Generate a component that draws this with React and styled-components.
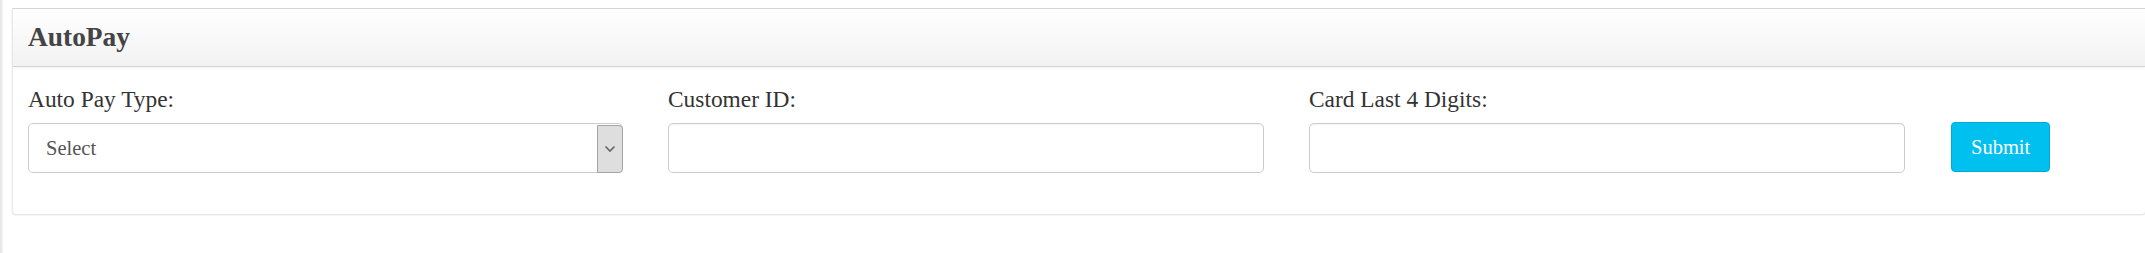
import React, { useState } from 'react';
import styled, { createGlobalStyle } from 'styled-components';

const GlobalStyle = createGlobalStyle`
  html, body {
    margin: 0;
    padding: 0;
    background: #ffffff;
  }
  body {
    font-family: "Liberation Serif", "Times New Roman", serif;
    color: #333333;
  }
  * {
    box-sizing: border-box;
  }
`;

const fields = [
  { id: 'customerId', label: 'Customer ID:' },
  { id: 'cardLast4', label: 'Card Last 4 Digits:' },
];

function Chevron() {
  return (
    <svg width="12" height="8" viewBox="0 0 12 8" aria-hidden="true">
      <path d="M1.5 1.5 L6 6 L10.5 1.5" fill="none" stroke="#666666" strokeWidth="1.6" />
    </svg>
  );
}

function App() {
  const [values, setValues] = useState({ customerId: '', cardLast4: '' });

  return (
    <>
      <GlobalStyle />
      <Page>
        <SideEdge />
        <Content>
          <Panel>
            <PanelHeader>
              <PanelTitle>AutoPay</PanelTitle>
            </PanelHeader>
            <PanelBody>
              <Field>
                <Label>Auto Pay Type:</Label>
                <SelectBox>
                  <SelectText>Select</SelectText>
                  <ArrowBox>
                    <Chevron />
                  </ArrowBox>
                </SelectBox>
              </Field>
              {fields.map((f) => (
                <Field key={f.id}>
                  <Label htmlFor={f.id}>{f.label}</Label>
                  <TextInput
                    id={f.id}
                    value={values[f.id]}
                    onChange={(e) => setValues({ ...values, [f.id]: e.target.value })}
                  />
                </Field>
              ))}
              <ButtonCell>
                <SubmitButton type="button">Submit</SubmitButton>
              </ButtonCell>
            </PanelBody>
          </Panel>
        </Content>
      </Page>
    </>
  );
}

export default App;

const Page = styled.div`
  display: flex;
  width: 2145px;
  height: 253px;
  overflow: hidden;
`;

const SideEdge = styled.div`
  width: 3px;
  flex: none;
  background: linear-gradient(to right, #e4e4e4, #f4f4f4);
`;

const Content = styled.div`
  flex: 1;
  padding: 8px 0 0 9px;
`;

const Panel = styled.div`
  width: 2134px;
  height: 206px;
  background: #ffffff;
  border-top: 1px solid #d4d4d4;
  border-left: 1px solid #ececec;
  border-right: 1px solid #ececec;
  border-radius: 0 0 4px 4px;
  box-shadow: 0 1px 2px rgba(0, 0, 0, 0.14);
`;

const PanelHeader = styled.div`
  display: flex;
  align-items: center;
  height: 58px;
  padding: 0 15px;
  background: linear-gradient(to bottom, #ffffff 0%, #f2f2f2 100%);
  border-bottom: 1px solid #d2d2d2;
  box-shadow: 0 2px 3px rgba(0, 0, 0, 0.04);
`;

const PanelTitle = styled.h3`
  margin: 0;
  font-size: 27.4px;
  line-height: 1.1;
  font-weight: 700;
  color: #444444;
`;

const PanelBody = styled.div`
  display: grid;
  grid-template-columns: 595px 596px 596px auto;
  column-gap: 45px;
  padding: 16px 15px 0 15px;
`;

const Field = styled.div`
  display: flex;
  flex-direction: column;
`;

const Label = styled.label`
  font-size: 23.4px;
  line-height: 33.4px;
  color: #333333;
  margin-bottom: 7px;
`;

const SelectBox = styled.div`
  display: flex;
  align-items: stretch;
  height: 50px;
  padding: 1px 0 0 0;
  border: 1px solid #cccccc;
  border-radius: 5px;
  background: #ffffff;
`;

const SelectText = styled.span`
  flex: 1;
  display: flex;
  align-items: center;
  padding-left: 17px;
  font-size: 20.5px;
  color: #555555;
`;

const ArrowBox = styled.span`
  width: 26px;
  display: flex;
  align-items: center;
  justify-content: center;
  background: #dedede;
  border: 1px solid #a4a4a4;
  border-radius: 0 4px 4px 0;
  margin-right: -1px;
  margin-bottom: -1px;
`;

const TextInput = styled.input`
  height: 50px;
  width: 100%;
  border: 1px solid #cccccc;
  border-radius: 5px;
  padding: 0 17px;
  font-family: "Liberation Serif", "Times New Roman", serif;
  font-size: 20.5px;
  color: #555555;
  outline: none;
  box-shadow: inset 0 1px 1px rgba(0, 0, 0, 0.05);
`;

const ButtonCell = styled.div`
  display: flex;
  padding-top: 39px;
  padding-left: 1px;
`;

const SubmitButton = styled.button`
  height: 50px;
  padding: 0 19px;
  background: #00c0ef;
  border: 1px solid #00acd6;
  border-radius: 4px;
  color: #ffffff;
  font-family: "Liberation Serif", "Times New Roman", serif;
  font-size: 20.5px;
  cursor: pointer;
`;
